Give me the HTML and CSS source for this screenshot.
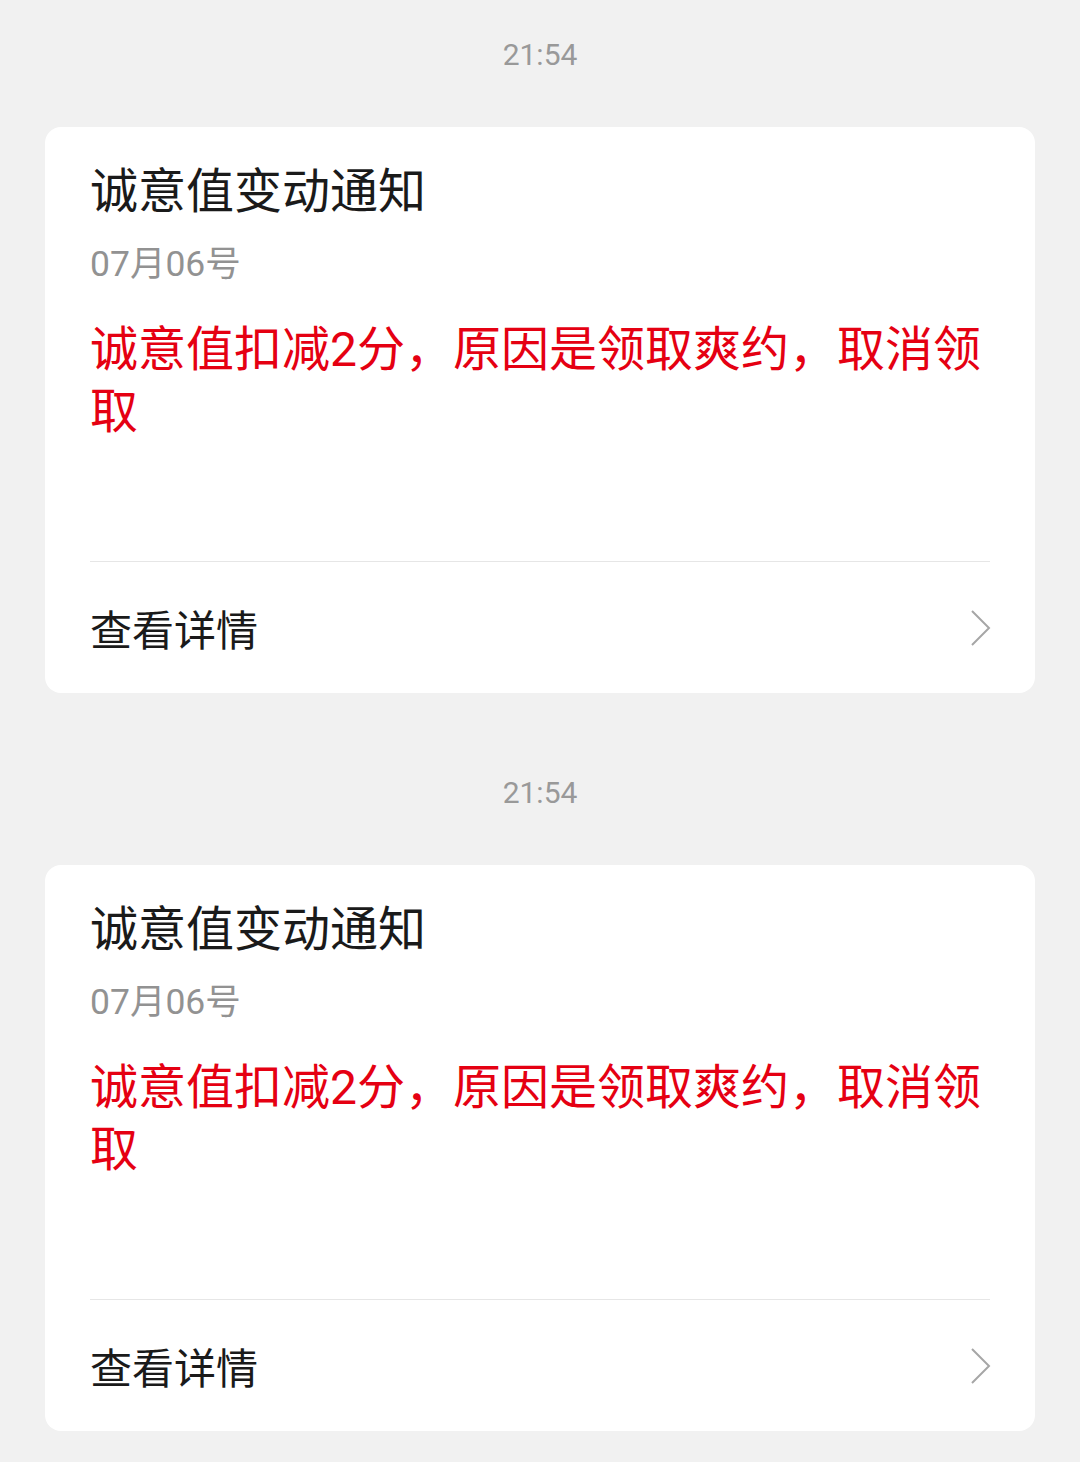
FILE: index.html
```html
<!DOCTYPE html>
<html lang="zh-CN">
<head>
  <meta charset="UTF-8" />
  <meta name="viewport" content="width=device-width, initial-scale=1.0" />
  <title>诚意值变动通知</title>
  <link rel="stylesheet" href="styles.css">
</head>
<body>
  <div class="list">
    <div class="item">
      <p class="time">21:54</p>
      <div class="card">
        <div class="card-body">
          <h2 class="title">诚意值变动通知</h2>
          <p class="date">07月06号</p>
          <p class="msg">诚意值扣减2分，原因是领取爽约，取消领取</p>
        </div>
        <a class="more" href="#">
          <span>查看详情</span>
          <svg class="arrow" width="22" height="38" viewBox="0 0 22 38">
            <path d="M2 2 L19 19 L2 36" fill="none" stroke="#a6a6a6" stroke-width="2" />
          </svg>
        </a>
      </div>
    </div>

    <div class="item">
      <p class="time">21:54</p>
      <div class="card">
        <div class="card-body">
          <h2 class="title">诚意值变动通知</h2>
          <p class="date">07月06号</p>
          <p class="msg">诚意值扣减2分，原因是领取爽约，取消领取</p>
        </div>
        <a class="more" href="#">
          <span>查看详情</span>
          <svg class="arrow" width="22" height="38" viewBox="0 0 22 38">
            <path d="M2 2 L19 19 L2 36" fill="none" stroke="#a6a6a6" stroke-width="2" />
          </svg>
        </a>
      </div>
    </div>
  </div>
</body>
</html>
```

FILE: styles.css
```css
body {
  margin: 0;
  background: #f1f1f1;
  font-family: Roboto, "Noto Sans CJK SC", sans-serif;
  color: #1a1a1a;
}
.list {
  padding: 0 45px;
}
.item {
  margin-bottom: 45px;
}
.time {
  margin: 0;
  padding-top: 35px;
  height: 92px;
  line-height: 40px;
  text-align: center;
  font-size: 30px;
  color: #999;
}
.card {
  background: #fff;
  border-radius: 16px;
  padding: 0 45px;
}
.card-body {
  padding-top: 33px;
  padding-bottom: 118px;
  border-bottom: 1px solid #e6e6e6;
}
.title {
  margin: 0;
  font-size: 48px;
  font-weight: normal;
  line-height: 64px;
  color: #1a1a1a;
}
.date {
  margin: 16px 0 0;
  font-size: 35.5px;
  line-height: 48px;
  color: #929292;
}
.msg {
  margin: 31px 0 0;
  font-size: 48px;
  line-height: 62px;
  color: #e50012;
}
.more {
  display: flex;
  align-items: center;
  justify-content: space-between;
  height: 131px;
  font-size: 42px;
  color: #1a1a1a;
  text-decoration: none;
}
.arrow {
  margin-right: -2px;
}
```
